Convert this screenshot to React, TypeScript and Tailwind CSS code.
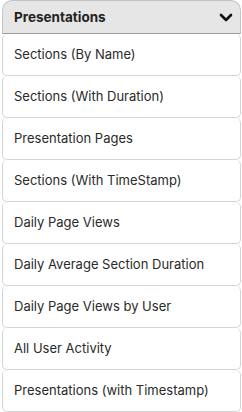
import React from "react";

const items = [
  "Sections (By Name)",
  "Sections (With Duration)",
  "Presentation Pages",
  "Sections (With TimeStamp)",
  "Daily Page Views",
  "Daily Average Section Duration",
  "Daily Page Views by User",
  "All User Activity",
  "Presentations (with Timestamp)",
];

export default function App() {
  return (
    <div
      className="w-[242px] h-[412px] bg-white pl-[2px] pr-[1px] overflow-hidden"
      style={{ fontFamily: "Inter, 'Noto Sans', sans-serif" }}
    >
      <div className="h-[34px] bg-[#e6e6e6] border border-[#c4c4c4] border-b-[#9c9c9c] rounded-t-[10px] flex items-center justify-between pl-[11px] pr-[7px]">
        <span className="text-[13.5px] font-bold text-[#222]">Presentations</span>
        <svg width="14" height="9" viewBox="0 0 14 9" fill="none" stroke="#111" strokeWidth="2.6" strokeLinecap="round" strokeLinejoin="round">
          <path d="M2 2l5 5 5-5" />
        </svg>
      </div>
      {items.map((t) => (
        <div
          key={t}
          className="h-[42px] border border-t-0 border-[#d4d4d4] rounded-[5px] flex items-center pl-[11px] text-[13px] text-[#2a2a2a]"
        >
          {t}
        </div>
      ))}
    </div>
  );
}
